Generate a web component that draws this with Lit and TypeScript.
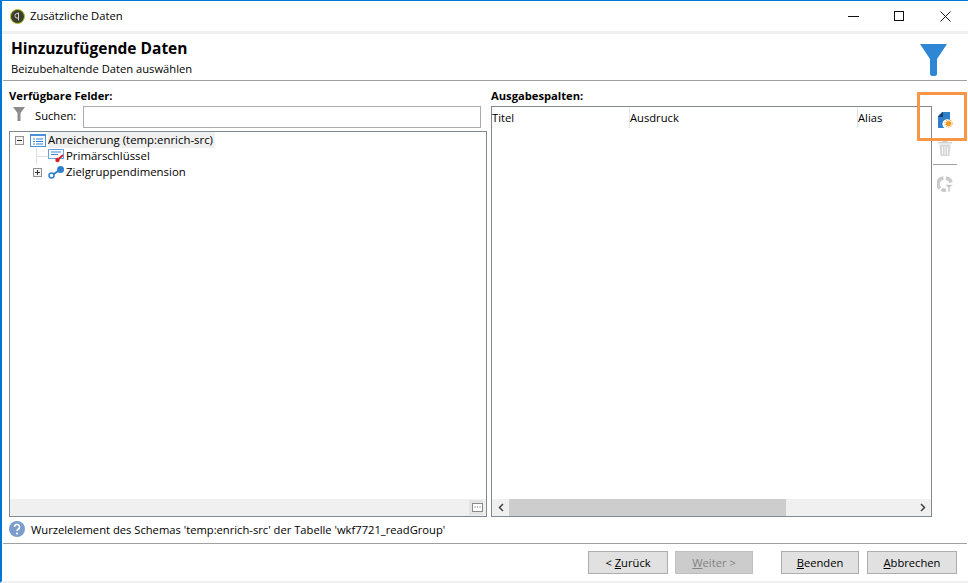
import { LitElement, html, css } from "lit";
import { customElement } from "lit/decorators.js";

@customElement("app-root")
export class AppRoot extends LitElement {
  static styles = css`
    :host { display: block; width: 968px; height: 583px; position: relative; overflow: hidden; background: #fff;
      font-family: "Open Sans", "Noto Sans", sans-serif; font-size: 11.2px; color: #000; }
    * { box-sizing: border-box; }
    .win { width: 968px; height: 583px; display: flex; flex-direction: column; border-top: 1px solid #0078d7; border-left: 2px solid #0078d7; border-bottom: 2px solid #f0f0f0; }
    .title { height: 30px; display: flex; align-items: center; flex: none; }
    .logo { margin-left: 8px; margin-right: 5px; display: block; }
    .title span { flex: 1; margin-bottom: 2px; }
    .wb { width: 46px; height: 30px; display: flex; align-items: center; justify-content: center; }
    .band { height: 3px; background: #f0f0f0; flex: none; }
    .head { height: 46px; flex: none; display: flex; padding: 4px 21px 0 9px; justify-content: space-between; }
    h1 { margin: 0; font-size: 15.5px; line-height: 20px; font-weight: 700; color: #000; }
    .sub { line-height: 18px; margin-top: 2px; }
    .funnel { margin-top: 6px; display: block; }
    .hr { height: 1px; background: #a0a0a0; flex: none; margin: 0 1px; }
    .body { flex: 1; display: flex; padding: 0 1px 0 7px; min-height: 0; }
    .left { width: 478px; display: flex; flex-direction: column; flex: none; }
    .right { width: 441px; margin-left: 4px; display: flex; flex-direction: column; flex: none; }
    .label { font-weight: 700; height: 25px; line-height: 14px; padding-top: 8px; }
    .search { height: 25px; display: flex; align-items: flex-start; flex: none; }
    .search svg { margin: 1px 10px 0 4px; }
    .search label { width: 43px; line-height: 20px; }
    .search input { margin-left: 5px; width: 398px; height: 22px; border: 1px solid #ababab; background: #fff; outline: none; }
    .tree { flex: 1; border: 1px solid #828790; display: flex; flex-direction: column; min-height: 0; }
    .nodes { flex: 1; font-size: 11.4px; }
    .node { height: 16px; display: flex; align-items: center; white-space: nowrap; }
    .node svg { flex: none; }
    .n0 { padding-left: 5px; }
    .n1 { padding-left: 23px; }
    .n1 > span:last-child { margin-bottom: 2px; }
    .exp { width: 9px; height: 9px; border: 1px solid #919191; background: #f3f3f3; display: flex; align-items: center; justify-content: center; flex: none; margin-right: 6px; }
    .ic { margin-right: 2px; }
    .sel { background: #f0f0f0; padding-right: 2px; line-height: 16px; }
    .bar { height: 17px; background: #f0f0f0; display: flex; justify-content: flex-end; flex: none; }
    .more { width: 14px; height: 15px; margin: 1px 3px 0 0; background: #e4e4e4; display: flex; align-items: center; justify-content: center; }
    .more svg { display: block; margin-left: 3px; }
    .grid { flex: 1; border: 1px solid #828790; display: flex; flex-direction: column; min-height: 0; }
    .cols { height: 21px; display: flex; flex: none; }
    .cols div { border-right: 1px solid #e5e5e5; line-height: 21px; }
    .cols div:last-child { border: 0; flex: 1; }
    .c1 { width: 138px; }
    .c2 { width: 228px; }
    .fill { flex: 1; }
    .sb { height: 17px; flex: none; background: #f0f0f0; display: flex; align-items: stretch; }
    .arrow { width: 17px; display: flex; align-items: center; justify-content: center; flex: none; }
    .thumb { width: 277px; background: #cdcdcd; }
    .sp { flex: 1; }
    .tools { width: 33px; flex: none; display: flex; flex-direction: column; align-items: center; padding: 31px 7px 0 0; }
    .tools svg { display: block; }
    .tsep { width: 24px; height: 1px; background: #a0a0a0; margin: 8px 0 11px; flex: none; }
    .trash { margin-top: 12px; }
    .hint { height: 26px; flex: none; display: flex; align-items: center; padding: 0 0 2px 7px; }
    .hint svg { margin-right: 6px; }
    .foot { height: 37px; flex: none; display: flex; padding: 7px 11px 0 0; justify-content: flex-end; }
    button { height: 23px; padding: 0; border: 1px solid #adadad; background: #e1e1e1; font: inherit; color: #000; margin: 0; }
    button[disabled] { background: #cccccc; border-color: #bfbfbf; color: #838383; }
    .b1 { width: 80px; }
    .b2 { width: 78px; margin-left: 7px; }
    .b3 { width: 78px; margin-left: 28px; }
    .b4 { width: 90px; margin-left: 8px; }
    .mark { position: absolute; left: 917px; top: 92px; width: 50px; height: 49px; border: 3px solid #f79646; pointer-events: none; }
  `;

  render() {
    return html`
      <div class="win">
        <div class="title">
          <svg class="logo" width="15" height="15" viewBox="0 0 15 15"><circle cx="7.5" cy="7.5" r="7" fill="#3c3c32" stroke="#b5c81e" stroke-width="1"/><path d="M8.5 3.5v8M8.500 4.500H7a2 2 0 0 0-2 2v.5a2 2 0 0 0 2 2h1.500" fill="none" stroke="#d8d8c0" stroke-width="1"/></svg>
          <span>Zusätzliche Daten</span>
          <div class="wb"><svg width="11" height="11"><path d="M0 5.500h11" stroke="#111"/></svg></div>
          <div class="wb"><svg width="11" height="11"><rect x=".5" y=".5" width="9" height="9" fill="none" stroke="#111"/></svg></div>
          <div class="wb"><svg width="11" height="11"><path d="M.5.5l10 10M10.500.5l-10 10" stroke="#111" fill="none"/></svg></div>
        </div>
        <div class="band"></div>
        <div class="head">
          <div><h1>Hinzuzufügende Daten</h1><div class="sub">Beizubehaltende Daten auswählen</div></div>
          <svg class="funnel" width="27" height="32" viewBox="0 0 27 32"><path d="M0 0h27L17 15V30q0 2-3.500 2T10 30V15z" fill="#2f86d4"/></svg>
        </div>
        <div class="hr"></div>
        <div class="body">
          <div class="left">
            <div class="label">Verfügbare Felder:</div>
            <div class="search">
              <svg width="12" height="14" viewBox="0 0 12 14"><path d="M0 0h12L7.500 6v8h-3V6z" fill="#8c8c8c"/></svg>
              <label>Suchen:</label><input />
            </div>
            <div class="tree">
              <div class="nodes">
                <div class="node n0">
                  <span class="exp"><svg width="7" height="7"><path d="M1 3.500h5" stroke="#333"/></svg></span>
                  <svg class="ic" width="16" height="13" viewBox="0 0 16 13"><rect x=".5" y=".5" width="15" height="12" fill="#fff" stroke="#4a90d9"/><rect width="16" height="2" fill="#4a90d9"/><path d="M3 5h2M6 5h7M3 7.500h2M6 7.500h7M3 10h2M6 10h7" stroke="#2f7fd0"/></svg>
                  <span class="sel">Anreicherung (temp:enrich-src)</span>
                </div>
                <div class="node n1">
                  <svg width="15" height="16" viewBox="0 0 15 16"><path d="M3.500 0v16M3.500 8.500H15" stroke="#dedede"/></svg>
                  <svg class="ic" width="16" height="14" viewBox="0 0 16 14"><rect x=".5" y=".5" width="15" height="9" fill="#fff" stroke="#6aa5e0"/><path d="M3 3h10M3 5.500h7" stroke="#3a86d4"/><path d="M10 10.500l5-4.500" stroke="#d8202a" stroke-width="1.800"/><circle cx="9.500" cy="11" r="2.200" fill="#d8202a"/></svg>
                  <span>Primärschlüssel</span>
                </div>
                <div class="node n1">
                  <span class="exp"><svg width="7" height="7"><path d="M1 3.500h5M3.500 1v5" stroke="#333"/></svg></span>
                  <svg class="ic" width="16" height="13" viewBox="0 0 16 13"><path d="M4 9l8-5" stroke="#2f7fd0" stroke-width="2"/><circle cx="3.500" cy="9.500" r="2.500" fill="#fff" stroke="#2f7fd0" stroke-width="1.500"/><circle cx="12.500" cy="3.500" r="3.500" fill="#2f7fd0"/></svg>
                  <span>Zielgruppendimension</span>
                </div>
              </div>
              <div class="bar"><div class="more"><svg width="11" height="9" viewBox="0 0 11 9"><rect x=".5" y=".5" width="10" height="8" fill="#fff" stroke="#8a8a8a"/><path d="M2.500 4h1M5 4h1M7.500 4h1" stroke="#555"/></svg></div></div>
            </div>
          </div>
          <div class="right">
            <div class="label">Ausgabespalten:</div>
            <div class="grid">
              <div class="cols"><div class="c1">Titel</div><div class="c2">Ausdruck</div><div>Alias</div></div>
              <div class="fill"></div>
              <div class="sb">
                <div class="arrow"><svg width="6" height="9"><path d="M5 1L1.500 4.500 5 8" fill="none" stroke="#444" stroke-width="1.500"/></svg></div>
                <div class="thumb"></div><div class="sp"></div>
                <div class="arrow"><svg width="6" height="9"><path d="M1 1l3.500 3.500L1 8" fill="none" stroke="#444" stroke-width="1.500"/></svg></div>
              </div>
            </div>
          </div>
          <div class="tools">
            <svg width="15" height="16" viewBox="0 0 15 16"><path d="M4 0h8v8a4.500 4.500 0 0 0-5.500 8H0V4z" fill="#2f7fc9"/><path d="M5 0v5H0z" fill="#163f66"/><circle cx="10.500" cy="11.500" r="2.600" fill="#f59a1d"/><circle cx="10.500" cy="11.500" r="3.600" fill="none" stroke="#f7b25a" stroke-width="1.200" stroke-dasharray="1.300 1"/></svg>
            <svg class="trash" width="14" height="16" viewBox="0 0 14 16"><path d="M0 2h14v1.500H0zM4.500 0h5v2h-5z" fill="#d2d2d2"/><path d="M1.500 4.500h11L11.500 16h-9z" fill="#d8d8d8"/><path d="M4.500 6.500v8M7 6.500v8M9.500 6.500v8" stroke="#f4f4f4"/></svg>
            <div class="tsep"></div>
            <svg width="16" height="16" viewBox="0 0 16 16"><path d="M6.500 2A6 6 0 0 0 3 12.500" fill="none" stroke="#cacaca" stroke-width="3.500"/><path d="M9 1.900A6 6 0 0 1 14 6.500" fill="none" stroke="#cacaca" stroke-width="3.500"/><path d="M4.500 13.200A6 6 0 0 0 9 14" fill="none" stroke="#cacaca" stroke-width="3.500"/><path d="M8 8.500h8l-3 3V16h-2v-4.500z" fill="#c4c4c4" stroke="#fff" stroke-width=".6"/></svg>
          </div>
        </div>
        <div class="hint">
          <svg width="16" height="16" viewBox="0 0 16 16"><circle cx="8" cy="8" r="8" fill="#7b9dcb"/><path d="M5.500 6a2.500 2.500 0 1 1 3.800 2.100c-.9.600-1.300 1-1.300 2" fill="none" stroke="#fff" stroke-width="1.700"/><circle cx="8" cy="12.500" r="1.100" fill="#fff"/></svg>
          <span>Wurzelelement des Schemas 'temp:enrich-src' der Tabelle 'wkf7721_readGroup'</span>
        </div>
        <div class="hr"></div>
        <div class="foot">
          <button class="b1">&lt; <u>Z</u>urück</button>
          <button class="b2" disabled><u>W</u>eiter &gt;</button>
          <button class="b3"><u>B</u>eenden</button>
          <button class="b4"><u>A</u>bbrechen</button>
        </div>
      </div>
      <div class="mark"></div>
    `;
  }
}
